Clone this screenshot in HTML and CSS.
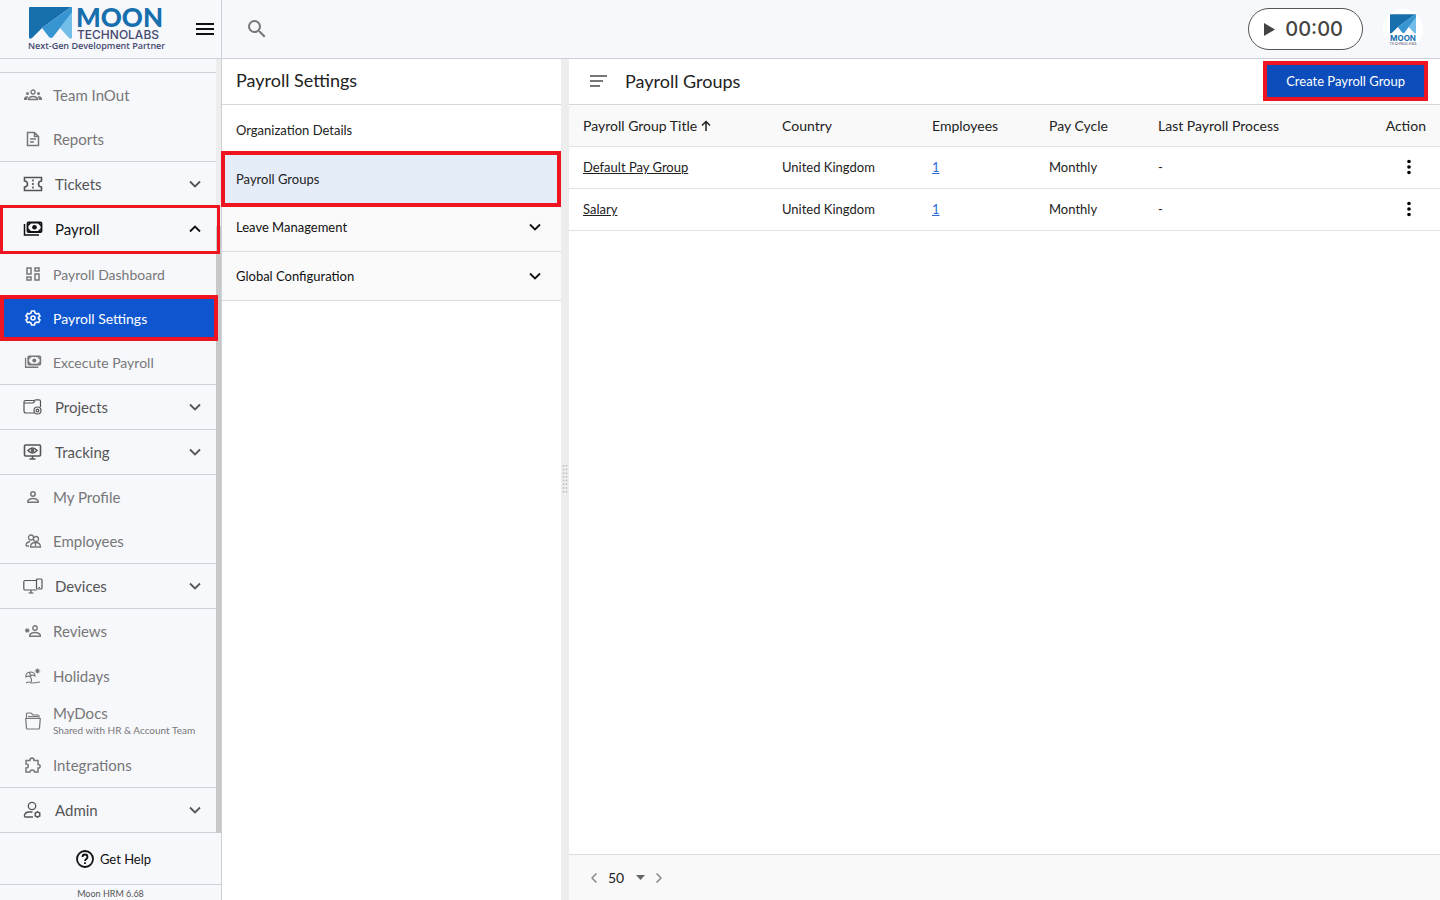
FILE: index.html
```html
<!DOCTYPE html>
<html lang="en">
<head>
    <meta charset="UTF-8">
    <meta name="viewport" content="width=device-width, initial-scale=1.0">
    <title>Payroll Groups - Moon HRM</title>
    <link rel="stylesheet" href="styles.css">
</head>
<body>
    <svg class="sprite" aria-hidden="true">
        <symbol id="chevron" viewBox="0 0 12 12"><path d="M1 3.500l5 5 5-5" fill="none" stroke="currentColor" stroke-width="1.800"/></symbol>
        <symbol id="money" viewBox="0 0 20 16">
            <rect x="4.500" y="1.500" width="14" height="9.500" rx="1" fill="none" stroke="currentColor" stroke-width="1.800"/>
            <circle cx="11.500" cy="6.200" r="2.300" fill="currentColor"/>
            <path d="M5 4.500L7.500 2M18 4.500L15.500 2M5 8l2.500 2.500M18 8l-2.500 2.500M1.500 3v11H16" fill="none" stroke="currentColor" stroke-width="1.500"/>
        </symbol>
        <symbol id="dots" viewBox="0 0 24 24"><path d="M12 8a2 2 0 1 0 0-4 2 2 0 0 0 0 4zm0 2a2 2 0 1 0 0 4 2 2 0 0 0 0-4zm0 6a2 2 0 1 0 0 4 2 2 0 0 0 0-4z"/></symbol>
        <symbol id="mountain" viewBox="0 0 43 32">
            <path d="M1 0h41L13 21 3 31q-3 2-3-1V1q0-1 1-1z" fill="#176fae"/>
            <path d="M42 0h1v6L31 21l-7 9q-2 2-4 0l-7-9z" fill="#3795d1"/>
            <path d="M43 5v25q0 3-3 1l-9-10z" fill="#73bde9"/>
        </symbol>
    </svg>

    <header class="topbar">
        <div class="brand">
            <a href="#" class="logo" aria-label="Moon Technolabs">
                <svg width="145" height="58" viewBox="0 0 145 58">
                    <use href="#mountain" x="1" y="7" width="43" height="32"/>
                    <text x="48" y="27" class="logo-name">MOON</text>
                    <text x="49" y="39" class="logo-sub">TECHNOLABS</text>
                    <text x="0" y="49" class="logo-tag">Next-Gen Development Partner</text>
                </svg>
            </a>
            <button class="icon-btn" aria-label="Toggle menu">
                <svg width="18" height="12" viewBox="0 0 18 12"><path d="M0 1h18M0 6h18M0 11h18" stroke="#111" stroke-width="2"/></svg>
            </button>
        </div>
        <div class="tools">
            <button class="icon-btn" aria-label="Search">
                <svg width="24" height="24" viewBox="0 0 24 24" fill="#777"><path d="M15.500 14h-.79l-.28-.27A6.471 6.471 0 0 0 16 9.500 6.500 6.500 0 1 0 9.500 16c1.610 0 3.090-.59 4.230-1.570l.27.28v.79l5 4.990L20.490 19l-4.990-5zm-6 0C7.010 14 5 11.990 5 9.500S7.010 5 9.500 5 14 7.010 14 9.500 11.990 14 9.500 14z"/></svg>
            </button>
            <button class="timer">
                <svg width="11" height="13" viewBox="0 0 11 13"><path d="M0 0l11 6.500L0 13z" fill="#444"/></svg>
                00:00
            </button>
            <a href="#" class="avatar" aria-label="Account">
                <svg width="40" height="40" viewBox="0 0 40 40">
                    <circle cx="20" cy="20" r="20" fill="#fff"/>
                    <use href="#mountain" x="7" y="5" width="26" height="20"/>
                    <text x="20" y="32" class="avatar-name">MOON</text>
                    <text x="20" y="36" class="avatar-sub">TECHNOLABS</text>
                </svg>
            </a>
        </div>
    </header>

    <div class="page">
        <aside class="sidebar">
            <nav class="menu">
                <ul class="menu-group menu-first">
                    <li><a href="#">
                        <svg width="18" height="12" viewBox="0 0 18 12"><g fill="none" stroke="currentColor" stroke-width="1.300"><circle cx="9" cy="3" r="2"/><path d="M4.500 10.500V9.500Q6 7.500 9 7.500t4.500 2v1z"/></g><g fill="currentColor"><circle cx="3.500" cy="4.500" r="1.500"/><circle cx="14.500" cy="4.500" r="1.500"/><path d="M0 11V9q1-2 4-2L3 11zM18 11V9q-1-2-4-2l1 4z"/></g></svg>
                        Team InOut</a></li>
                    <li><a href="#">
                        <svg width="14" height="16" viewBox="0 0 14 16" fill="none" stroke="currentColor" stroke-width="1.500"><path d="M1.500 1.500h7l4 4v9h-11zM8.500 1.500v4h4M4 8h6M4 11h4"/></svg>
                        Reports</a></li>
                </ul>
                <button class="menu-head">
                    <svg width="20" height="16" viewBox="0 0 20 16" fill="none" stroke="currentColor" stroke-width="1.600"><path d="M1.500 1.500h17v3.500a3 3 0 0 0 0 6v3.500h-17V11a3 3 0 0 0 0-6z"/><path d="M10 3.500v2M10 7v2M10 10.500v2"/></svg>
                    Tickets<svg class="arrow"><use href="#chevron"/></svg>
                </button>
                <button class="menu-head open marked">
                    <svg width="20" height="16"><use href="#money"/></svg>
                    Payroll<svg class="arrow"><use href="#chevron"/></svg>
                </button>
                <ul class="menu-group payroll-group">
                    <li><a href="#">
                        <svg width="14" height="14" viewBox="0 0 14 14" fill="none" stroke="currentColor" stroke-width="1.500"><path d="M1 1h4v6H1zM9 1h4v3H9zM1 10h4v3H1zM9 7h4v6H9z"/></svg>
                        Payroll Dashboard</a></li>
                    <li class="active marked"><a href="#">
                        <svg width="16" height="16" viewBox="0 0 16 16" fill="none" stroke="currentColor" stroke-width="1.600"><path d="M6.500 1h3l.5 2 1.500 1 2-.6L15 6l-1.500 1.400v1.200L15 10l-1.500 2.600-2-.6L10 13l-.5 2h-3L6 13l-1.500-1-2 .6L1 10l1.500-1.400V7.400L1 6l1.500-2.600 2 .6L6 3z"/><circle cx="8" cy="8" r="2"/></svg>
                        Payroll Settings</a></li>
                    <li><a href="#">
                        <svg width="18" height="14"><use href="#money"/></svg>
                        Excecute Payroll</a></li>
                </ul>
                <button class="menu-head">
                    <svg width="20" height="16" viewBox="0 0 20 16" fill="none" stroke="currentColor" stroke-width="1.200"><path d="M11 14H3q-2 0-2-2V3q0-1.500 1.500-1.500H11L13 .8h3q1.500 0 1.500 1.500V8M1 4h9l2-2"/><circle cx="14.500" cy="11.500" r="3.500"/><circle cx="14.500" cy="11.500" r="1.400"/></svg>
                    Projects<svg class="arrow"><use href="#chevron"/></svg>
                </button>
                <button class="menu-head">
                    <svg width="20" height="16" viewBox="0 0 20 16" fill="none" stroke="currentColor" stroke-width="1.600"><rect x="1.500" y="1" width="16" height="11" rx="1"/><path d="M5 6.500q4.500-5 9 0-4.500 5-9 0zM9.500 12v3M6.500 15h6"/><circle cx="9.500" cy="6.500" r="1"/></svg>
                    Tracking<svg class="arrow"><use href="#chevron"/></svg>
                </button>
                <ul class="menu-group">
                    <li><a href="#">
                        <svg width="12" height="12" viewBox="0 0 12 12" fill="none" stroke="currentColor" stroke-width="1.500"><circle cx="6" cy="3" r="2.200"/><path d="M.8 11.200V10Q2 7.500 6 7.500t5.200 2.500v1.200z"/></svg>
                        My Profile</a></li>
                    <li><a href="#">
                        <svg width="16" height="14" viewBox="0 0 16 14" fill="none" stroke="currentColor" stroke-width="1.300"><circle cx="6" cy="3.500" r="2.500"/><circle cx="11" cy="5" r="2.500"/><path d="M1 12q0-4 4-4.500M1 12h3M5.500 13q0-4.500 5-4.500t5 4.500zM10.500 9v3"/></svg>
                        Employees</a></li>
                </ul>
                <button class="menu-head">
                    <svg width="20" height="16" viewBox="0 0 20 16" fill="none" stroke="currentColor" stroke-width="1.200"><path d="M13 2.500H2Q.8 2.500.8 4v6.500Q.8 12 2 12h11.500M8 12v3M5.500 15h5"/><rect x="13.500" y="1" width="5.500" height="10" rx="1"/><path d="M15.500 9.500h1.500"/></svg>
                    Devices<svg class="arrow"><use href="#chevron"/></svg>
                </button>
                <ul class="menu-group">
                    <li><a href="#">
                        <svg width="16" height="12" viewBox="0 0 16 12" fill="none" stroke="currentColor" stroke-width="1.400"><circle cx="10" cy="3" r="2.200"/><path d="M4.700 11.200V10Q6 7.500 10 7.500t5.300 2.500v1.200zM0 5.500h4.500M1 3.700l2.500 3.600M3.500 3.700L1 7.300"/></svg>
                        Reviews</a></li>
                    <li class="tall"><a href="#">
                        <svg width="16" height="16" viewBox="0 0 16 16" fill="none" stroke="currentColor" stroke-width="1.200"><path d="M1 9q-1-4 4-5 5 0 5 4L7 7 5 8.500 3 8zM5 8q2 3 1.500 6M4 4l2 4M1 15q3-2 5 0 4 0 9-1"/><circle cx="12.500" cy="3" r="1.300" fill="currentColor"/><path d="M12.500 0v6M9.500 3h6M10.500 1l4 4M14.500 1l-4 4" stroke-width=".5"/></svg>
                        Holidays</a></li>
                    <li class="tall"><a href="#">
                        <svg width="16" height="18" viewBox="0 0 16 18" fill="none" stroke="currentColor" stroke-width="1.200"><path d="M1.500 6V2q0-1 1-1H6l2 2h5q1 0 1 1v2M.7 6.500h14.600L14.500 16q0 1-1 1h-11q-1 0-1-1zM3 4.700h10"/></svg>
                        <span>MyDocs<small>Shared with HR &amp; Account Team</small></span></a></li>
                    <li><a href="#">
                        <svg width="16" height="16" viewBox="0 0 16 16" fill="none" stroke="currentColor" stroke-width="1.500"><path d="M1 3.500h4q0-2.500 2-2.500t2 2.500h4v4q2.200 0 2.200 1.800T13 11v4H9.500q0-2-2.200-2T5 15H1v-4q2.300 0 2.300-2T1 7z"/></svg>
                        Integrations</a></li>
                </ul>
                <button class="menu-head">
                    <svg width="20" height="18" viewBox="0 0 20 18" fill="none" stroke="currentColor" stroke-width="1.300"><circle cx="9" cy="5" r="3.700"/><path d="M10 16H2.500Q1 16 1.500 14q1-3 4-3h4"/><circle cx="14.500" cy="13.500" r="2.300"/><path d="M14.500 10v1.500M14.500 15.500V17M11.500 11.800l1.300.7M16.200 14.500l1.300.7M11.500 15.200l1.300-.7M16.200 12.500l1.300-.7"/></svg>
                    Admin<svg class="arrow"><use href="#chevron"/></svg>
                </button>
                <span class="scroll-track"></span>
            </nav>
            <a href="#" class="help">
                <svg width="18" height="18" viewBox="0 0 18 18" fill="none" stroke="currentColor" stroke-width="1.800"><circle cx="9" cy="9" r="8"/><path d="M6.500 7q0-2.500 2.500-2.500T11.500 7q0 1-1.200 2T9 11M9 12.200V14"/></svg>
                Get Help
            </a>
            <p class="version">Moon HRM 6.68</p>
        </aside>

        <section class="settings">
            <h2>Payroll Settings</h2>
            <a href="#" class="setting">Organization Details</a>
            <a href="#" class="setting selected marked">Payroll Groups</a>
            <button class="setting fold">Leave Management<svg class="arrow"><use href="#chevron"/></svg></button>
            <button class="setting fold">Global Configuration<svg class="arrow"><use href="#chevron"/></svg></button>
        </section>

        <div class="splitter">
            <svg width="6" height="29" viewBox="0 0 6 29"><path d="M1.500 0v29M4.500 0v29" stroke="#bbb" stroke-width="1.500" stroke-dasharray="1.500 2.200"/></svg>
        </div>

        <main class="content">
            <div class="content-head">
                <svg width="17" height="12" viewBox="0 0 17 12"><path d="M0 1h17M0 6h13M0 11h10" stroke="#777" stroke-width="1.800"/></svg>
                <h1>Payroll Groups</h1>
                <button class="create marked">Create Payroll Group</button>
            </div>
            <table>
                <thead>
                    <tr>
                        <th class="col-title">Payroll Group Title <svg width="10" height="11" viewBox="0 0 10 11"><path d="M5 11V1.500M1 5.500l4-4 4 4" fill="none" stroke="#222" stroke-width="1.500"/></svg></th>
                        <th class="col-country">Country</th>
                        <th class="col-employees">Employees</th>
                        <th class="col-cycle">Pay Cycle</th>
                        <th>Last Payroll Process</th>
                        <th class="action">Action</th>
                    </tr>
                </thead>
                <tbody>
                    <tr>
                        <td><a href="#">Default Pay Group</a></td>
                        <td>United Kingdom</td>
                        <td><a href="#" class="count">1</a></td>
                        <td>Monthly</td>
                        <td>-</td>
                        <td class="action"><button class="icon-btn" aria-label="Actions for Default Pay Group"><svg width="22" height="22"><use href="#dots"/></svg></button></td>
                    </tr>
                    <tr>
                        <td><a href="#">Salary</a></td>
                        <td>United Kingdom</td>
                        <td><a href="#" class="count">1</a></td>
                        <td>Monthly</td>
                        <td>-</td>
                        <td class="action"><button class="icon-btn" aria-label="Actions for Salary"><svg width="22" height="22"><use href="#dots"/></svg></button></td>
                    </tr>
                </tbody>
            </table>
            <footer class="pager">
                <button class="icon-btn" aria-label="Previous page"><svg width="6" height="10" viewBox="0 0 6 10"><path d="M5.500.5L1 5l4.500 4.500" fill="none" stroke="#888" stroke-width="1.500"/></svg></button>
                <select aria-label="Rows per page"><option>50</option><option>75</option></select>
                <svg class="caret" width="9" height="5" viewBox="0 0 9 5"><path d="M0 0h9L4.500 5z" fill="#666"/></svg>
                <button class="icon-btn" aria-label="Next page"><svg width="6" height="10" viewBox="0 0 6 10"><path d="M.5.5L5 5 .5 9.500" fill="none" stroke="#888" stroke-width="1.500"/></svg></button>
            </footer>
        </main>
    </div>
</body>
</html>
```

FILE: styles.css
```css
* {
    box-sizing: border-box;
}
body {
    display: flex;
    flex-direction: column;
    min-height: 100vh;
    margin: 0;
    background: #fff;
    color: #222;
    font-family: Lato, sans-serif;
    font-size: 13px;
}
a {
    color: inherit;
    text-decoration: none;
}
button, select {
    border: none;
    background: none;
    color: inherit;
    font: inherit;
    padding: 0;
    cursor: pointer;
}
svg {
    flex-shrink: 0;
}
.sprite {
    display: none;
}
.icon-btn {
    display: inline-flex;
    align-items: center;
    justify-content: center;
}
.arrow {
    width: 12px;
    height: 12px;
    margin-left: auto;
}

/* red callout frame */
.marked {
    position: relative;
}
.marked::after {
    content: "";
    position: absolute;
    inset: -1px;
    border: 4px solid #ee1520;
    pointer-events: none;
    z-index: 2;
}

/* top bar */
.topbar {
    display: flex;
    height: 59px;
    background: #f7f8fc;
    border-bottom: 1px solid #cdd0d5;
}
.brand {
    display: flex;
    align-items: center;
    justify-content: space-between;
    width: 222px;
    padding: 0 7px 0 28px;
    border-right: 1px solid #cdd0d5;
}
.logo {
    display: flex;
}
.logo-name {
    font: 900 26px Lato, sans-serif;
    fill: #176fae;
}
.logo-sub {
    font: 500 12px Inter, sans-serif;
    fill: #454a70;
}
.logo-tag {
    font: 600 9px "Open Sans", sans-serif;
    fill: #454a70;
}
.tools {
    display: flex;
    flex: 1;
    align-items: center;
    gap: 20px;
    padding: 0 17px 0 23px;
}
.timer {
    display: flex;
    align-items: center;
    gap: 10px;
    height: 42px;
    margin-left: auto;
    padding: 0 19px 0 15px;
    border: 1px solid #555;
    border-radius: 21px;
    background: #fff;
    color: #444;
    font: 500 20px Inter, sans-serif;
}
.avatar {
    display: flex;
}
.avatar-name {
    font: 700 8px Inter, sans-serif;
    fill: #176fae;
    text-anchor: middle;
}
.avatar-sub {
    font: 4px Inter, sans-serif;
    fill: #454a70;
    text-anchor: middle;
}

.page {
    display: flex;
    flex: 1;
}

/* sidebar */
.sidebar {
    display: flex;
    flex-direction: column;
    width: 222px;
    background: #f7f8fc;
    border-right: 1px solid #cdd0d5;
}
.menu {
    position: relative;
    padding: 13px 5px 0 0;
    color: #777;
    font-size: 15px;
}
.menu-group {
    margin: 0;
    padding: 0;
    list-style: none;
    border-bottom: 1px solid #cdd0d5;
}
.menu-first {
    border-top: 1px solid #cdd0d5;
}
.payroll-group {
    font-size: 14px;
}
.menu-group a {
    display: flex;
    align-items: center;
    gap: 10px;
    height: 44px;
    padding-left: 23px;
}
.menu-group svg {
    width: 20px;
}
.menu-group .tall a {
    height: 45px;
}
.menu-group small {
    display: block;
    font-size: 10px;
    line-height: 16px;
}
.menu-group .active {
    background: #0d56d0;
    color: #fff;
}
.menu-head {
    display: flex;
    align-items: center;
    gap: 12px;
    width: 100%;
    height: 45px;
    padding: 0 15px 0 23px;
    border-bottom: 1px solid #cdd0d5;
    color: #555;
}
.menu-head.open {
    border-bottom-color: transparent;
    color: #111;
}
.open .arrow {
    transform: rotate(180deg);
}
.menu .marked::after {
    right: -2px;
    left: 0;
}
.menu .open::after {
    inset: -2px -4px -3px 0;
    border-width: 3px;
}
.scroll-track {
    position: absolute;
    top: 0;
    right: 0;
    bottom: 0;
    width: 5px;
    background: linear-gradient(#ededed 167px, #c8c8c8 167px);
}
.help {
    display: flex;
    align-items: center;
    justify-content: center;
    gap: 6px;
    height: 52px;
    padding-left: 6px;
    border-bottom: 1px solid #cdd0d5;
    color: #111;
    font-size: 13px;
}
.version {
    margin: 0;
    padding-top: 3px;
    color: #555;
    font-size: 9px;
    line-height: 12px;
    text-align: center;
}

/* settings list */
.settings {
    width: 339px;
}
h1, h2 {
    margin: 0;
    font-size: 18px;
    font-weight: 400;
}
.settings h2 {
    height: 46px;
    padding-left: 14px;
    border-bottom: 1px solid #d4d6d9;
    line-height: 42px;
}
.setting {
    display: flex;
    align-items: center;
    width: 100%;
    height: 49px;
    padding: 0 20px 0 14px;
}
.selected {
    background: #e5edf9;
}
.selected::after {
    inset: -3px 0 -4px -1px;
}
.fold {
    background: #fafafa;
    border-bottom: 1px solid #ddd;
    color: #111;
}
.splitter {
    display: flex;
    align-items: center;
    justify-content: center;
    width: 8px;
    background: #ededed;
}

/* payroll groups */
.content {
    display: flex;
    flex: 1;
    flex-direction: column;
}
.content-head {
    display: flex;
    align-items: center;
    gap: 18px;
    height: 46px;
    padding: 0 13px 2px 21px;
    border-bottom: 1px solid #d4d6d9;
}
.create {
    height: 38px;
    margin-left: auto;
    padding: 0 22px;
    background: #0c4dbb;
    color: #fff;
}
table {
    width: 100%;
    border-collapse: collapse;
}
th, td {
    height: 42px;
    padding: 0 0 0 14px;
    border-bottom: 1px solid #e2e2e2;
    font-weight: 400;
    text-align: left;
}
th {
    height: 41px;
    background: #f9f9f9;
    font-size: 14px;
}
td a {
    text-decoration: underline;
}
td .count {
    color: #2b6bd6;
}
.col-title {
    width: 199px;
}
.col-country {
    width: 150px;
}
.col-employees {
    width: 117px;
}
.col-cycle {
    width: 109px;
}
th.action {
    padding-right: 14px;
    text-align: right;
}
td.action {
    padding-right: 20px;
    text-align: right;
}
td .icon-btn {
    vertical-align: middle;
}
.pager {
    display: flex;
    align-items: center;
    gap: 11px;
    height: 46px;
    margin-top: auto;
    padding-left: 22px;
    border-top: 1px solid #ddd;
    background: #f9f9f9;
}
.pager select {
    appearance: none;
    font-size: 14px;
}
```
